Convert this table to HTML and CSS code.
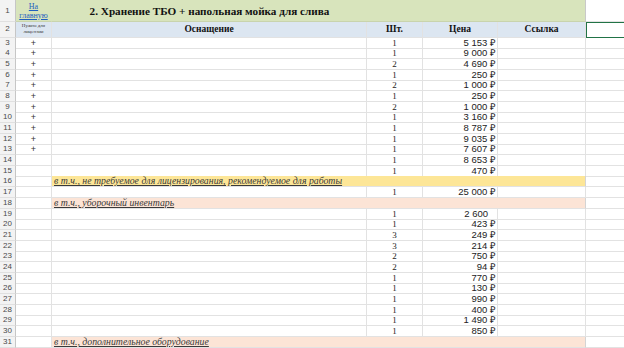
FILE: index.html
```html
<!DOCTYPE html>
<html lang="ru">
<head>
<meta charset="utf-8">
<link rel="stylesheet" href="styles.css">
</head>
<body>
<div class="sheet">
  <div class="row r1">
    <div class="rh">1</div>
    <div class="c a green"><a class="link" href="#">На<br>главную</a></div>
    <div class="c span4 green title"><span class="title-text">2. Хранение ТБО + напольная мойка для слива</span></div>
    <div class="c f"></div>
  </div>
  <div class="row r2">
    <div class="rh">2</div>
    <div class="c a blue tiny">Нужно для<br>лицензии</div>
    <div class="c b blue hd">Оснащение</div>
    <div class="c blue hd">Шт.</div>
    <div class="c blue hd">Цена</div>
    <div class="c blue hd">Ссылка</div>
    <div class="c f sel"></div>
  </div>
  <div class="row"><div class="rh">3</div><div class="c a">+</div><div class="c b"></div><div class="c q">1</div><div class="c p">5 153 ₽</div><div class="c"></div><div class="c f"></div></div>
  <div class="row"><div class="rh">4</div><div class="c a">+</div><div class="c b"></div><div class="c q">1</div><div class="c p">9 000 ₽</div><div class="c"></div><div class="c f"></div></div>
  <div class="row"><div class="rh">5</div><div class="c a">+</div><div class="c b"></div><div class="c q">2</div><div class="c p">4 690 ₽</div><div class="c"></div><div class="c f"></div></div>
  <div class="row"><div class="rh">6</div><div class="c a">+</div><div class="c b"></div><div class="c q">1</div><div class="c p">250 ₽</div><div class="c"></div><div class="c f"></div></div>
  <div class="row"><div class="rh">7</div><div class="c a">+</div><div class="c b"></div><div class="c q">2</div><div class="c p">1 000 ₽</div><div class="c"></div><div class="c f"></div></div>
  <div class="row"><div class="rh">8</div><div class="c a">+</div><div class="c b"></div><div class="c q">1</div><div class="c p">250 ₽</div><div class="c"></div><div class="c f"></div></div>
  <div class="row"><div class="rh">9</div><div class="c a">+</div><div class="c b"></div><div class="c q">2</div><div class="c p">1 000 ₽</div><div class="c"></div><div class="c f"></div></div>
  <div class="row"><div class="rh">10</div><div class="c a">+</div><div class="c b"></div><div class="c q">1</div><div class="c p">3 160 ₽</div><div class="c"></div><div class="c f"></div></div>
  <div class="row"><div class="rh">11</div><div class="c a">+</div><div class="c b"></div><div class="c q">1</div><div class="c p">8 787 ₽</div><div class="c"></div><div class="c f"></div></div>
  <div class="row"><div class="rh">12</div><div class="c a">+</div><div class="c b"></div><div class="c q">1</div><div class="c p">9 035 ₽</div><div class="c"></div><div class="c f"></div></div>
  <div class="row"><div class="rh">13</div><div class="c a">+</div><div class="c b"></div><div class="c q">1</div><div class="c p">7 607 ₽</div><div class="c"></div><div class="c f"></div></div>
  <div class="row"><div class="rh">14</div><div class="c a"></div><div class="c b"></div><div class="c q">1</div><div class="c p">8 653 ₽</div><div class="c"></div><div class="c f"></div></div>
  <div class="row"><div class="rh">15</div><div class="c a"></div><div class="c b"></div><div class="c q">1</div><div class="c p">470 ₽</div><div class="c"></div><div class="c f"></div></div>
  <div class="row"><div class="rh">16</div><div class="c a"></div><div class="c span4 band yellow"><span class="note">в т.ч., не требуемое для лицензирования, рекомендуемое для работы</span></div><div class="c f"></div></div>
  <div class="row"><div class="rh">17</div><div class="c a"></div><div class="c b"></div><div class="c q">1</div><div class="c p">25 000 ₽</div><div class="c"></div><div class="c f"></div></div>
  <div class="row"><div class="rh">18</div><div class="c a"></div><div class="c span4 band peach"><span class="note">в т.ч., уборочный инвентарь</span></div><div class="c f"></div></div>
  <div class="row"><div class="rh">19</div><div class="c a"></div><div class="c b"></div><div class="c q">1</div><div class="c p">2 600&nbsp;&nbsp;&nbsp;</div><div class="c"></div><div class="c f"></div></div>
  <div class="row"><div class="rh">20</div><div class="c a"></div><div class="c b"></div><div class="c q">1</div><div class="c p">423 ₽</div><div class="c"></div><div class="c f"></div></div>
  <div class="row"><div class="rh">21</div><div class="c a"></div><div class="c b"></div><div class="c q">3</div><div class="c p">249 ₽</div><div class="c"></div><div class="c f"></div></div>
  <div class="row"><div class="rh">22</div><div class="c a"></div><div class="c b"></div><div class="c q">3</div><div class="c p">214 ₽</div><div class="c"></div><div class="c f"></div></div>
  <div class="row"><div class="rh">23</div><div class="c a"></div><div class="c b"></div><div class="c q">2</div><div class="c p">750 ₽</div><div class="c"></div><div class="c f"></div></div>
  <div class="row"><div class="rh">24</div><div class="c a"></div><div class="c b"></div><div class="c q">2</div><div class="c p">94 ₽</div><div class="c"></div><div class="c f"></div></div>
  <div class="row"><div class="rh">25</div><div class="c a"></div><div class="c b"></div><div class="c q">1</div><div class="c p">770 ₽</div><div class="c"></div><div class="c f"></div></div>
  <div class="row"><div class="rh">26</div><div class="c a"></div><div class="c b"></div><div class="c q">1</div><div class="c p">130 ₽</div><div class="c"></div><div class="c f"></div></div>
  <div class="row"><div class="rh">27</div><div class="c a"></div><div class="c b"></div><div class="c q">1</div><div class="c p">990 ₽</div><div class="c"></div><div class="c f"></div></div>
  <div class="row"><div class="rh">28</div><div class="c a"></div><div class="c b"></div><div class="c q">1</div><div class="c p">400 ₽</div><div class="c"></div><div class="c f"></div></div>
  <div class="row"><div class="rh">29</div><div class="c a"></div><div class="c b"></div><div class="c q">1</div><div class="c p">1 490 ₽</div><div class="c"></div><div class="c f"></div></div>
  <div class="row"><div class="rh">30</div><div class="c a"></div><div class="c b"></div><div class="c q">1</div><div class="c p">850 ₽</div><div class="c"></div><div class="c f"></div></div>
  <div class="row"><div class="rh">31</div><div class="c a"></div><div class="c span4 band peach"><span class="note">в т.ч., дополнительное оборудование</span></div><div class="c f"></div></div>
</div>
</body>
</html>
```

FILE: styles.css
```css
* { box-sizing: border-box; }
html, body { margin: 0; padding: 0; background: #ffffff; }
body { width: 624px; height: 348px; overflow: hidden; }

.sheet {
  display: flex;
  flex-direction: column;
  font-family: "Liberation Sans", Arial, sans-serif;
  color: #222;
}

.row {
  display: grid;
  grid-template-columns: 16px 36px 315px 56px 75px 88px 38px;
  height: 10.69px;
}
.r1 { height: 22px; }
.r2 { height: 15.5px; }

.rh {
  background: #f3f3f3;
  border-right: 1px solid #c6c6c6;
  border-bottom: 1px solid #e0e0e0;
  color: #4a4a4a;
  font-size: 8px;
  line-height: 10px;
  display: flex;
  align-items: center;
  justify-content: center;
}

.c {
  border-right: 1px solid #e2e2e2;
  border-bottom: 1px solid #e2e2e2;
  font-size: 9.5px;
  line-height: 10px;
  display: flex;
  align-items: center;
  overflow: visible;
  white-space: nowrap;
}
.c.f { border-right: none; }

.a { justify-content: center; font-size: 9px; color: #333; }
.q { justify-content: center; font-family: "Liberation Serif", serif; font-size: 9px; }
.p { justify-content: flex-end; padding-right: 1px; font-size: 9.5px; color: #222; }

.span4 { grid-column: span 4; }

.green { background: #d8e4bc; border-right-color: #d8e4bc; border-bottom-color: #c9d4ad; }
.green.span4 { border-right-color: #c9c9c9; }
.blue { background: #dce6f1; }

.link {
  font-family: "Liberation Serif", serif;
  font-size: 8px;
  line-height: 9px;
  color: #1f5fbf;
  text-decoration: underline;
  text-align: center;
}

.title-text {
  width: 315px;
  text-align: center;
  font-family: "Liberation Serif", serif;
  font-weight: bold;
  font-size: 11.2px;
  color: #111;
}

.tiny {
  font-family: "Liberation Serif", serif;
  font-size: 5px;
  line-height: 6px;
  text-align: center;
  color: #333;
  white-space: normal;
}

.hd {
  justify-content: center;
  font-family: "Liberation Serif", serif;
  font-weight: bold;
  font-size: 9.5px;
  color: #111;
}

.sel {
  border: 1.5px solid #217346;
  background: #fff;
}

.band { border-right-color: #d4d4d4; padding-left: 2px; }
.yellow { background: #fde697; }
.peach { background: #fce4d6; }

.note {
  font-family: "Liberation Serif", serif;
  font-style: italic;
  font-size: 9.8px;
  text-decoration: underline;
  color: #3a3a3a;
}
```
